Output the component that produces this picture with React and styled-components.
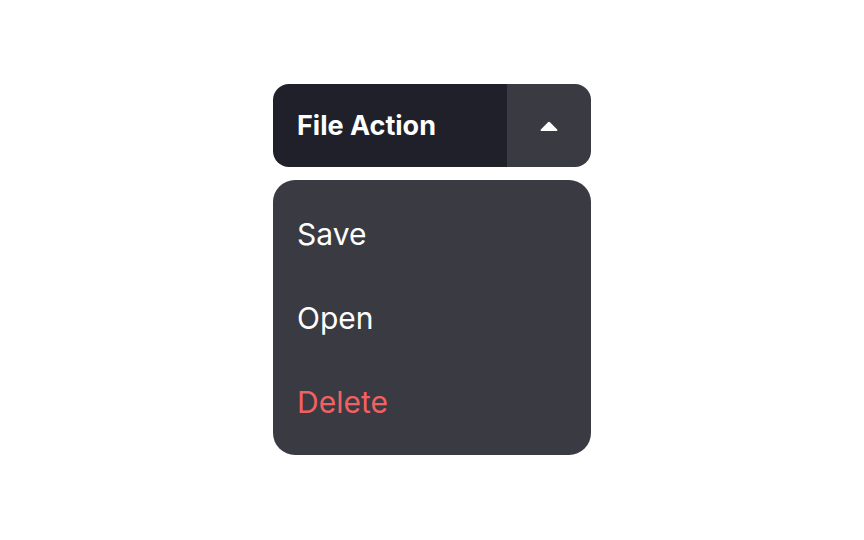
import styled, { createGlobalStyle } from "styled-components";

const Global = createGlobalStyle`
  html, body {
    margin: 0;
    padding: 0;
    background: #ffffff;
    font-family: Inter, "Noto Sans", sans-serif;
  }
`;

const Page = styled.div`
  width: 864px;
  height: 540px;
  display: flex;
  justify-content: center;
  padding-top: 84px;
  box-sizing: border-box;
`;

const Wrapper = styled.div`
  width: 318px;
  display: flex;
  flex-direction: column;
  gap: 13px;
`;

const SplitButton = styled.div`
  display: flex;
  height: 83px;
  border-radius: 16px;
  overflow: hidden;
`;

const MainAction = styled.button`
  flex: 1;
  border: none;
  background: #1f2029;
  color: #ffffff;
  font-family: inherit;
  font-size: 27px;
  font-weight: 700;
  text-align: left;
  padding: 0 24px;
  cursor: pointer;
`;

const Toggle = styled.button`
  width: 84px;
  border: none;
  background: #393a42;
  display: flex;
  align-items: center;
  justify-content: center;
  cursor: pointer;
`;

const Menu = styled.ul`
  list-style: none;
  margin: 0;
  padding: 12px 0 11px;
  background: #393a42;
  border-radius: 22px;
`;

const Item = styled.li`
  height: 84px;
  display: flex;
  align-items: center;
  padding: 0 24px;
  font-size: 30px;
  font-weight: 400;
  color: ${(p) => (p.$danger ? "#f26161" : "#ffffff")};
  cursor: pointer;
`;

const Caret = () => (
  <svg width="18" height="10" viewBox="0 0 18 10">
    <path d="M8 1.2a1.4 1.4 0 0 1 2 0l7.2 7.4c.5.5.2 1.4-.6 1.4H1.4c-.8 0-1.1-.9-.6-1.4z" fill="#ffffff" />
  </svg>
);

export default function App() {
  return (
    <>
      <Global />
      <Page>
        <Wrapper>
          <SplitButton>
            <MainAction>File Action</MainAction>
            <Toggle>
              <Caret />
            </Toggle>
          </SplitButton>
          <Menu>
            <Item>Save</Item>
            <Item>Open</Item>
            <Item $danger>Delete</Item>
          </Menu>
        </Wrapper>
      </Page>
    </>
  );
}
